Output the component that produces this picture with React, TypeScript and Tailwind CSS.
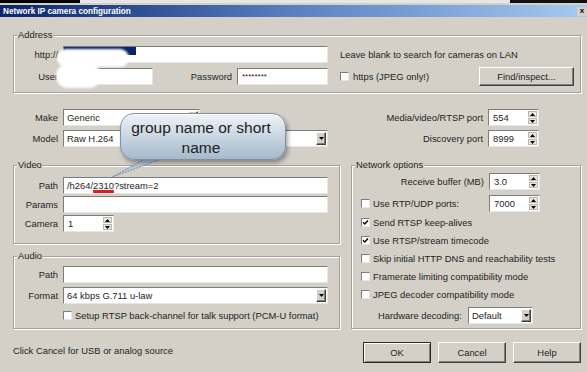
import React from "react";

const sunken =
  "border border-t-[#7c7c7c] border-l-[#7c7c7c] border-b-[#e6e6e6] border-r-[#e6e6e6]";
const raised =
  "border border-t-white border-l-white border-b-[#404040] border-r-[#404040] shadow-[inset_-1px_-1px_0_#808080]";

function Tri({ up }: { up?: boolean }) {
  return (
    <svg width="5" height="3" viewBox="0 0 5 3">
      <path d={up ? "M0 3L2.5 0L5 3Z" : "M0 0L5 0L2.5 3Z"} fill="#000" />
    </svg>
  );
}

function Field({ className, children }: { className: string; children?: React.ReactNode }) {
  return (
    <div className={`flex h-[17px] items-center bg-white pl-[3px] ${sunken} ${className}`}>
      {children}
    </div>
  );
}

function Spin({ value, className }: { value: string; className: string }) {
  return (
    <div className={`flex h-[17px] bg-white ${sunken} ${className}`}>
      <span className="flex flex-1 items-center pl-[4px]">{value}</span>
      <div className="flex w-[10px] flex-col gap-[1px] py-[1px] pr-[1px]">
        <div className="flex flex-1 items-center justify-center border border-[#b9b6b0] bg-[#e8e6e1]">
          <Tri up />
        </div>
        <div className="flex flex-1 items-center justify-center border border-[#b9b6b0] bg-[#e8e6e1]">
          <Tri />
        </div>
      </div>
    </div>
  );
}

function Combo({ value, className }: { value: string; className: string }) {
  return (
    <div className={`flex h-[17px] bg-white ${sunken} ${className}`}>
      <span className="flex flex-1 items-center pl-[3px]">{value}</span>
      <div className={`m-[1px] flex w-[10px] items-center justify-center bg-[#d4d0c8] ${raised}`}>
        <Tri />
      </div>
    </div>
  );
}

function Check({ checked }: { checked?: boolean }) {
  return (
    <div
      className={`flex h-[9px] w-[9px] shrink-0 items-center justify-center bg-white ${sunken}`}
    >
      {checked ? (
        <svg width="7" height="7" viewBox="0 0 7 7">
          <path d="M1 3.2L2.8 5L6 1.6" stroke="#000" strokeWidth="1.4" fill="none" />
        </svg>
      ) : null}
    </div>
  );
}

function Group({
  label,
  className,
  children,
}: {
  label: string;
  className: string;
  children?: React.ReactNode;
}) {
  return (
    <div
      className={`relative border border-[#a3a199] shadow-[inset_1px_1px_0_#fff,1px_1px_0_#fff] ${className}`}
    >
      <span className="absolute -top-[7px] left-[3px] bg-[#d4d0c8] px-[1px] leading-[11px]">
        {label}
      </span>
      {children}
    </div>
  );
}

function Label({ children }: { children: React.ReactNode }) {
  return <span className="w-[44px] shrink-0 text-right">{children}</span>;
}

export default function App() {
  return (
    <div className="relative h-[372px] w-[587px] overflow-hidden bg-[#d4d0c8] font-['Liberation_Sans',Arial,sans-serif] text-[9.4px] leading-[11px] text-[#1e1e1e]">
      <div className="flex h-[3px]">
        <div className="w-[80px] bg-black" />
        <div className="flex-1 bg-[#e6e6e6]" />
        <div className="w-[77px] bg-[#111]" />
      </div>
      <div className="h-[2px]" />

      <div className="flex h-[12px] items-center justify-between bg-gradient-to-r from-[#0a246a] via-[#5b80c0] to-[#a6caf0] pl-[3px]">
        <span className="text-[8.2px] font-bold text-white">Network IP camera configuration</span>
        <div className="flex h-[9px] w-[10px] items-center justify-center bg-[#d4d0c8] text-[8px] font-bold leading-none text-black">
          x
        </div>
      </div>

      <div className="pl-[13px] pr-[6px] pt-[18px]">
        <Group label="Address" className="h-[58px] pt-[10px]">
          <div className="flex h-[17px] items-center">
            <Label>http://</Label>
            <Field className="ml-[5px] w-[265px]" />
            <span className="ml-[12px]">Leave blank to search for cameras on LAN</span>
          </div>
          <div className="mt-[4px] flex h-[18px] items-center">
            <Label>User</Label>
            <Field className="ml-[5px] w-[90px]" />
            <span className="w-[79px] text-right">Password</span>
            <Field className="ml-[5px] w-[91px] pl-[4px] text-[8px]">********</Field>
            <div className="ml-[12px]">
              <Check />
            </div>
            <span className="ml-[4px]">https (JPEG only!)</span>
            <div
              className={`ml-auto mr-[6px] flex h-[19px] w-[95px] items-center justify-center bg-[#d4d0c8] ${raised}`}
            >
              Find/inspect...
            </div>
          </div>
        </Group>

        <div className="mt-[16px] flex h-[17px] items-center">
          <span className="w-[45px] text-right">Make</span>
          <Combo value="Generic" className="ml-[5px] w-[137px]" />
          <span className="ml-auto">Media/video/RTSP port</span>
          <Spin value="554" className="ml-[5px] mr-[42px] w-[51px]" />
        </div>
        <div className="mt-[4px] flex h-[17px] items-center">
          <span className="w-[45px] text-right">Model</span>
          <Combo value="Raw H.264" className="ml-[5px] w-[265px]" />
          <span className="ml-auto">Discovery port</span>
          <Spin value="8999" className="ml-[5px] mr-[42px] w-[51px]" />
        </div>

        <div className="mt-[18px] flex gap-[11px]">
          <div className="flex w-[327px] flex-col">
            <Group label="Video" className="h-[79px] pt-[11px]">
              <div className="flex h-[17px] items-center">
                <Label>Path</Label>
                <Field className="ml-[5px] w-[265px]">
                  /h264/
                  <span className="underline decoration-[#d42222] decoration-[3px] underline-offset-[1px]">
                    2310
                  </span>
                  ?stream=2
                </Field>
              </div>
              <div className="mt-[2px] flex h-[17px] items-center">
                <Label>Params</Label>
                <Field className="ml-[5px] w-[265px]" />
              </div>
              <div className="mt-[2px] flex h-[17px] items-center">
                <Label>Camera</Label>
                <Spin value="1" className="ml-[5px] w-[51px]" />
              </div>
            </Group>

            <Group label="Audio" className="mt-[12px] h-[73px] pt-[9px]">
              <div className="flex h-[17px] items-center">
                <Label>Path</Label>
                <Field className="ml-[5px] w-[265px]" />
              </div>
              <div className="mt-[4px] flex h-[17px] items-center">
                <Label>Format</Label>
                <Combo value="64 kbps G.711 u-law" className="ml-[5px] w-[265px]" />
              </div>
              <div className="mt-[6px] flex h-[11px] items-center pl-[49px]">
                <Check />
                <span className="ml-[3px]">
                  Setup RTSP back-channel for talk support (PCM-U format)
                </span>
              </div>
            </Group>
          </div>

          <Group label="Network options" className="h-[164px] w-[230px] pt-[7px]">
            <div className="flex h-[17px] items-center justify-end pr-[40px]">
              <span>Receive buffer (MB)</span>
              <Spin value="3.0" className="ml-[5px] w-[51px]" />
            </div>
            <div className="mt-[5px] flex h-[17px] items-center pl-[9px] pr-[40px]">
              <Check />
              <span className="ml-[3px]">Use RTP/UDP ports:</span>
              <Spin value="7000" className="ml-auto w-[51px]" />
            </div>
            <div className="mt-[1px] flex flex-col pl-[9px]">
              {[
                ["Send RTSP keep-alives", true],
                ["Use RTSP/stream timecode", true],
                ["Skip initial HTTP DNS and reachability tests", false],
                ["Framerate limiting compatibility mode", false],
                ["JPEG decoder compatibility mode", false],
              ].map(([text, on]) => (
                <div key={text as string} className="flex h-[18px] items-center">
                  <Check checked={on as boolean} />
                  <span className="ml-[3px]">{text}</span>
                </div>
              ))}
            </div>
            <div className="mt-[4px] flex h-[16px] items-center pl-[26px]">
              <span className="w-[90px]">Hardware decoding:</span>
              <Combo value="Default" className="h-[16px] w-[65px]" />
            </div>
          </Group>
        </div>

        <div className="mt-[13px] flex h-[21px] items-center">
          <span className="pb-[4px]">Click Cancel for USB or analog source</span>
          <div className="ml-auto flex gap-[7px]">
            <div className="flex h-[21px] w-[68px] items-center justify-center border border-[#2a2a2a] bg-[#d4d0c8] shadow-[inset_1px_1px_0_#fff,inset_-1px_-1px_0_#808080]">
              OK
            </div>
            <div className={`flex h-[21px] w-[68px] items-center justify-center bg-[#d4d0c8] ${raised}`}>
              Cancel
            </div>
            <div className={`flex h-[21px] w-[68px] items-center justify-center bg-[#d4d0c8] ${raised}`}>
              Help
            </div>
          </div>
        </div>
      </div>

      {/* redaction blobs */}
      <div className="absolute left-[64px] top-[47px] h-[8px] w-[72px] bg-[#0a246a]" />
      <div className="absolute left-[57px] top-[49px] h-[18px] w-[72px] rounded-full bg-white blur-[1px]" />
      <div className="absolute left-[56px] top-[64px] h-[24px] w-[45px] rounded-full bg-white blur-[1px]" />

      {/* callout */}
      <svg className="absolute left-[108px] top-[150px]" width="70" height="32" viewBox="0 0 70 32">
        <polygon
          points="42,6 62,6 4,27"
          fill="#b6c6d6"
          stroke="#7d92a8"
          strokeWidth="1"
          strokeDasharray="2 1"
        />
      </svg>
      <div className="absolute left-[120px] top-[113px] h-[47px] w-[166px] rounded-[14px] border border-[#7d90a6] bg-gradient-to-b from-[#eef3f8] to-[#a6b9cb] pr-[4px] pt-[4px] text-center font-['Liberation_Sans',Arial,sans-serif] text-[15.5px] leading-[20px] text-[#222] shadow-[2px_3px_4px_rgba(0,0,0,0.35),inset_0_1px_0_#fff]">
        group name or short
        <br />
        name
      </div>
    </div>
  );
}
